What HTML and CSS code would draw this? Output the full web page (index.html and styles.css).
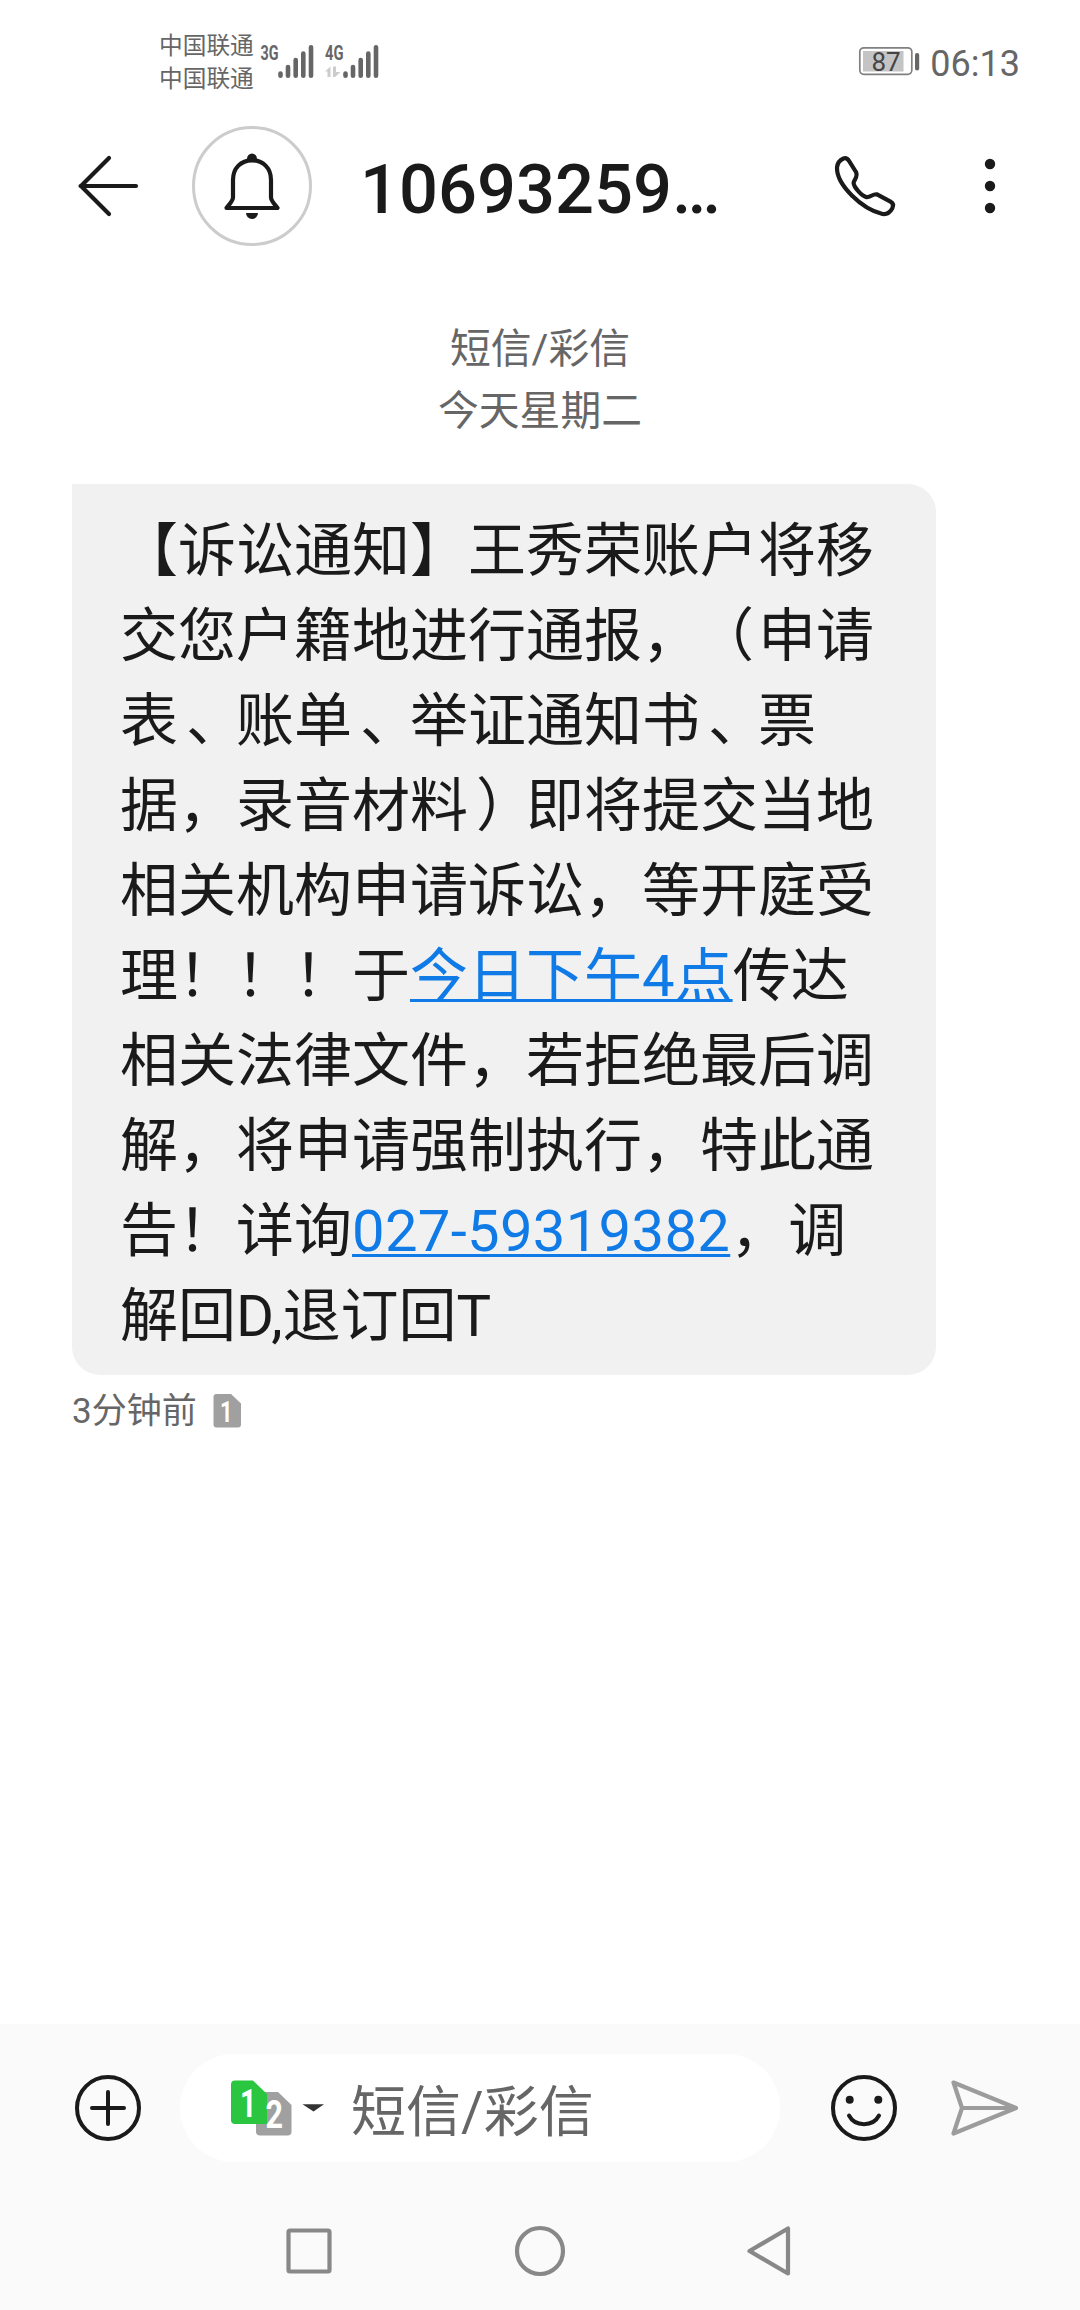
FILE: index.html
```html
<!DOCTYPE html>
<html lang="zh-CN">
<head>
<meta charset="utf-8">
<title>短信</title>
<link rel="stylesheet" href="styles.css">
</head>
<body>
<div class="phone">
  <div class="status">
    <div class="carriers"><span>中国联通</span><span>中国联通</span></div>
    <svg class="signals" width="120" height="36" viewBox="260 44 120 36">
      <g class="net"><text x="260.5" y="59.5" textLength="18" lengthAdjust="spacingAndGlyphs">3G</text><text x="325" y="59.5" textLength="18.5" lengthAdjust="spacingAndGlyphs">4G</text></g>
      <g class="bars">
        <path d="M280.500 73.500v2.200M288 67v8.700M295.700 60v15.700M303.300 53.500v22.200M311 47.200v28.500"/>
        <path d="M345.500 73.500v2.200M353 67v8.700M360.700 60v15.700M368.300 53.500v22.200M376 47.200v28.500"/>
      </g>
      <path class="traffic" d="M325 71.500l5.500-5V77h-3v-5.500zM333 66.500h3v5.500h4.500l-5.500 5h-2z"/>
    </svg>
    <svg class="battery" width="62" height="30" viewBox="859 46 62 30">
      <rect x="860.800" y="47.800" width="52" height="26.500" rx="4" fill="none" stroke="#808080" stroke-width="1.700"/>
      <rect x="864" y="51" width="40.500" height="20.500" fill="#c4c4c4"/>
      <rect x="916" y="53" width="4.200" height="17.500" rx="2" fill="#666"/>
      <text x="887" y="70.700" text-anchor="middle">87</text>
    </svg>
    <span class="clock">06:13</span>
  </div>

  <header class="header">
    <svg class="back" width="64" height="64" viewBox="76 154 64 64"><path d="M80.500 186H136M109 158L81 186l28 28"/></svg>
    <div class="avatar">
      <svg width="60" height="70" viewBox="222 151 60 70">
        <path class="line" d="M226.500 208C229 204.500 233 201 233 197.500V180C233 168 241 160.300 252 160.300S271 168 271 180v17.500c0 3.500 4 7 6.500 10.500z"/>
        <path class="solid" d="M247 159a5 5.500 0 0 1 10 0zM246 213h12a6 6 0 0 1-12 0z"/>
      </svg>
    </div>
    <h1 class="title">10693259…</h1>
    <svg class="call" width="64" height="64" viewBox="833 153 64 64"><path d="M837 166.500C837.500 161.500 840 159 843.500 157.500C846 156.700 847.500 157.500 849 159.800L856 171C858.500 176 853.500 179 853.600 182C854 186.500 861.500 194.500 866 196C870 197.200 872.500 192.500 877 193.300L890.500 200.700C893 202 893.600 204.500 892.200 207.500C890 211.500 886.500 213.500 882.500 213C862 208 836.500 184 837 166.500z"/></svg>
    <svg class="more" width="12" height="56" viewBox="984 158 12 56"><circle cx="990" cy="164" r="5.200"/><circle cx="990" cy="186" r="5.200"/><circle cx="990" cy="208" r="5.200"/></svg>
  </header>

  <main class="thread">
    <div class="day"><span>短信/彩信</span><span>今天星期二</span></div>
    <div class="bubble">
      <p>【诉讼通知】王秀荣账户将移</p>
      <p>交您户籍地进行通报，<span class="mark open">（</span>申请</p>
      <p>表<span class="mark">、</span>账单<span class="mark">、</span>举证通知书<span class="mark">、</span>票</p>
      <p>据，录音材料<span class="mark">）</span>即将提交当地</p>
      <p>相关机构申请诉讼，等开庭受</p>
      <p>理！！！于<a>今日下午4点</a>传达</p>
      <p>相关法律文件，若拒绝最后调</p>
      <p>解，将申请强制执行，特此通</p>
      <p>告！详询<a class="tel">027-59319382</a>，调</p>
      <p>解回D,退订回T</p>
    </div>
    <div class="meta">
      <span>3分钟前</span>
      <svg width="28" height="34" viewBox="0 0 28 34"><path d="M3.500 0H18L28 9.500V30.500Q28 33.500 25 33.500H3.500Q.5 33.500 .5 30.500V3Q.5 0 3.500 0z" fill="#a0a0a0"/><text x="7" y="27.500" textLength="12.500" lengthAdjust="spacingAndGlyphs">1</text></svg>
    </div>
  </main>

  <footer class="composer">
    <svg class="plus" width="68" height="68" viewBox="-34 -34 68 68"><circle r="31"/><path d="M-16 0H16M0-16V16"/></svg>
    <div class="field">
      <svg class="sims" width="94" height="56" viewBox="231 2080 94 56">
        <path d="M260 2092H278L291.500 2105V2131.500Q291.500 2135.500 287.500 2135.500H260Q256 2135.500 256 2131.500V2096Q256 2092 260 2092z" fill="#a0a0a0"/>
        <path d="M235 2080.500H253L267 2094V2124H235Q231 2124 231 2120V2084.500Q231 2080.500 235 2080.500z" fill="#2ac63f"/>
        <text x="240" y="2116.500" textLength="16.500" lengthAdjust="spacingAndGlyphs">1</text><text x="265.500" y="2128" textLength="17.500" lengthAdjust="spacingAndGlyphs">2</text>
        <path d="M302.500 2104.200H324L313.500 2111.500z" fill="#333"/>
      </svg>
      <span>短信/彩信</span>
    </div>
    <svg class="smile" width="68" height="68" viewBox="-34 -34 68 68"><circle r="31"/><path d="M-15 7.500C-9 19 9 19 15 7.500"/><g class="eyes"><circle cx="-14.300" cy="-8.300" r="4"/><circle cx="14.300" cy="-8.300" r="4"/></g></svg>
    <svg class="send" width="70" height="58" viewBox="950 2079 70 58"><path d="M953.500 2082.500L1016 2108L953.500 2133.500L962 2108zM962 2108H1014"/></svg>
  </footer>

  <nav class="nav">
    <svg width="52" height="54" viewBox="-26 -27 52 54"><rect x="-20.500" y="-20.500" width="41" height="41" rx="1.500"/></svg>
    <svg width="54" height="54" viewBox="-27 -27 54 54"><circle r="23"/></svg>
    <svg width="52" height="54" viewBox="744 2224 52 54"><path d="M788 2228.500V2273.500L749.500 2251z"/></svg>
  </nav>
</div>
</body>
</html>
```
FILE: styles.css
```css
* { box-sizing: border-box; margin: 0; padding: 0; }
body {
  background: #fff;
  color: #1a1a1a;
  font-family: Roboto, "Noto Sans CJK SC", sans-serif;
  text-spacing-trim: space-all;
  text-autospace: no-autospace;
}
svg { display: block; flex: none; overflow: visible; }
.phone { width: 1080px; height: 2310px; display: flex; flex-direction: column; overflow: hidden; }

.status { height: 110px; flex: none; display: flex; align-items: flex-start; padding: 29px 60px 0 159px; color: #666; }
.carriers { display: flex; flex-direction: column; width: 101px; padding-top: 1px; font-size: 23.7px; line-height: 33px; font-weight: 400; white-space: nowrap; }
.signals { margin-top: 15px; }
.net { font: 700 20px Roboto, sans-serif; fill: #666; }
.bars { stroke: #666; stroke-width: 4.6; stroke-linecap: round; fill: none; }
.traffic { fill: #ccc; }
.battery { margin: 17px 0 0 auto; font: 400 26px Roboto, sans-serif; fill: #444; }
.clock { margin-left: 10px; margin-top: 14px; font-size: 36px; line-height: 42px; }

.header { height: 152px; flex: none; display: flex; align-items: center; padding: 0 84px 0 76px; }
.back, .call, .avatar .line { fill: none; stroke: #1a1a1a; stroke-width: 4.2; stroke-linecap: round; stroke-linejoin: round; }
.avatar { width: 120px; height: 120px; margin-left: 52px; border: 3px solid #ccc; border-radius: 50%; display: flex; align-items: center; justify-content: center; }
.solid, .more { fill: #1a1a1a; }
.title { margin-left: 48px; width: 473px; font-size: 68.6px; line-height: 84px; font-weight: 500; padding-top: 8px; white-space: nowrap; }
.more { margin-left: auto; }

.thread { flex: 1; display: flex; flex-direction: column; align-items: flex-start; }
.day { align-self: stretch; display: flex; flex-direction: column; align-items: center; padding-top: 57px; font-size: 40.8px; line-height: 61.5px; height: 222px; color: #666; }
.bubble { margin-left: 72px; width: 864px; height: 891px; padding: 25px 48px 16px; background: #f1f1f1; border-radius: 0 28px 28px 28px; font-size: 58px; }
.bubble p { height: 85px; line-height: 85px; white-space: nowrap; }
.bubble a { color: #107be6; text-decoration: underline; text-decoration-thickness: 3px; text-underline-offset: 3px; text-decoration-skip-ink: none; }
.bubble .tel { letter-spacing: 0.3px; }
/* half-width punctuation set nearer the middle of its full-width cell */
.mark { font-feature-settings: "halt"; margin-left: 8px; margin-right: 21px; }
.mark.open { margin-left: 25px; margin-right: 4px; }
.meta { display: flex; align-items: center; gap: 16px; margin: 15px 0 0 72px; height: 42px; font-size: 35px; line-height: 42px; color: #666; }
.meta span { padding-top: 2px; }
.meta text { font: 700 29px Roboto, sans-serif; fill: #fff; }

.composer { height: 168px; flex: none; display: flex; align-items: center; padding: 0 60px 0 74px; background: #fafafa; }
.plus, .smile { fill: none; stroke: #1a1a1a; stroke-width: 4; stroke-linecap: round; }
.field { margin-left: 38px; width: 600px; height: 108px; border-radius: 54px; background: #fff; display: flex; align-items: center; padding-left: 51px; gap: 26px; font-size: 55px; line-height: 80px; color: #666; }
.field span { padding-top: 8px; }
.sims { font: 700 38px Roboto, sans-serif; fill: #fff; }
.smile { margin-left: 50px; }
.eyes { fill: #1a1a1a; stroke: none; }
.send { margin-left: auto; fill: none; stroke: #9c9c9c; stroke-width: 4.2; stroke-linecap: round; stroke-linejoin: round; }
.nav { height: 118px; flex: none; display: flex; justify-content: space-between; padding: 32px 284px 0 283px; background: #fafafa; fill: none; stroke: #888; stroke-width: 4.2; stroke-linejoin: round; }
```
